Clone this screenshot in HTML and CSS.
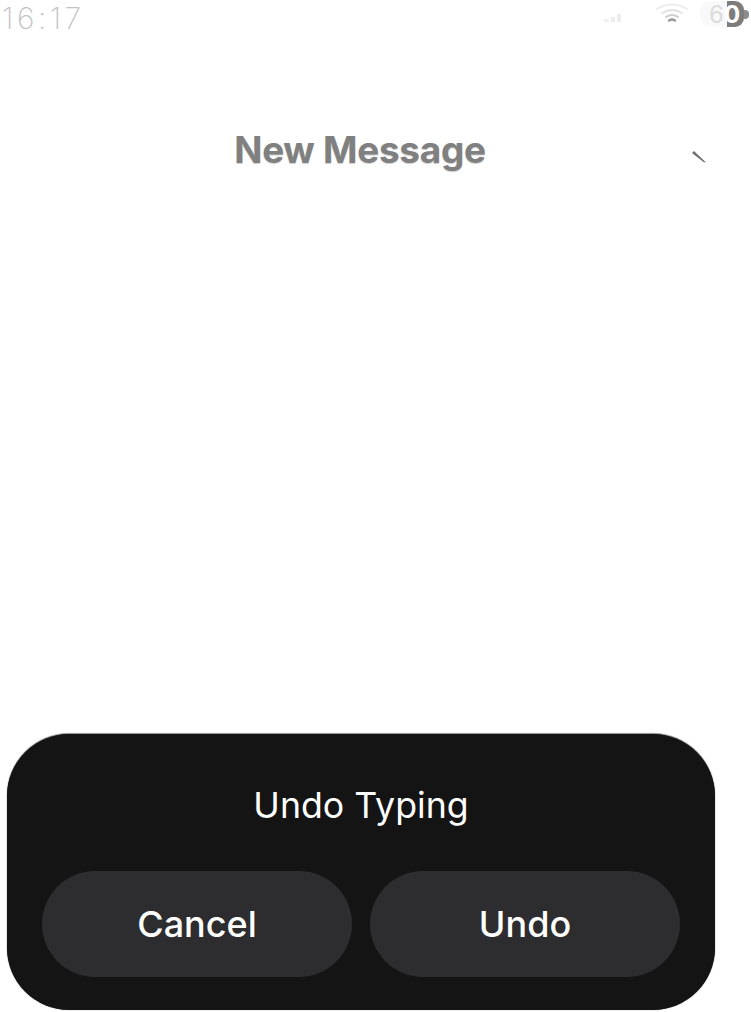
FILE: index.html
```html
<!DOCTYPE html>
<html lang="en">
<head>
    <meta charset="UTF-8">
    <meta name="viewport" content="width=device-width, initial-scale=1.0">
    <title>New Message</title>
    <link rel="stylesheet" href="styles.css">
</head>
<body>
    <div class="status-bar">
        <span class="time">16:17</span>
        <div class="status-icons">
            <svg class="signal" width="20" height="10" viewBox="0 0 20 10">
                <rect x="1" y="6" width="5" height="3" fill="#f1f1f1"/>
                <rect x="8" y="4" width="4" height="5" fill="#ececec"/>
                <rect x="14" y="1" width="4" height="8" fill="#ececec"/>
            </svg>
            <svg class="wifi" width="34" height="24" viewBox="0 0 34 24" fill="none" stroke-linecap="round">
                <path d="M2 8 Q17 -1 32 8" stroke="#ececec" stroke-width="2"/>
                <path d="M7 12 Q17 6 27 12" stroke="#e2e2e2" stroke-width="2"/>
                <path d="M11 16 Q17 12 23 16" stroke="#cfcfcf" stroke-width="2"/>
                <path d="M14 19.5 Q17 17.5 20 19.5" stroke="#9a9a9a" stroke-width="2.5"/>
            </svg>
            <div class="battery">
                <span class="battery-shell"></span>
                <span class="battery-end"></span>
                <span class="battery-cap"></span>
                <span class="battery-level"><span class="battery-digit">6</span>0</span>
            </div>
        </div>
    </div>

    <div class="nav-bar">
        <h1 class="nav-title">New Message</h1>
        <svg class="nav-mark" width="16" height="12" viewBox="0 0 16 12">
            <path d="M1 2 L3 0 L15 11.5 L12.5 11 Z" fill="#555555" opacity="0.85"/>
        </svg>
    </div>

    <div class="spacer"></div>

    <div class="sheet">
        <div class="sheet-title">Undo Typing</div>
        <div class="sheet-actions">
            <button class="sheet-button">Cancel</button>
            <button class="sheet-button">Undo</button>
        </div>
    </div>
</body>
</html>
```

FILE: styles.css
```css
html, body {
    height: 100%;
}

body {
    display: flex;
    flex-direction: column;
    margin: 0;
    background-color: #ffffff;
    font-family: Inter, "Liberation Sans", sans-serif;
    overflow: hidden;
}

.status-bar {
    display: flex;
    justify-content: space-between;
    align-items: flex-start;
    height: 30px;
    padding-left: 2px;
}

.time {
    font-size: 30px;
    font-weight: 200;
    line-height: 37px;
    letter-spacing: 3.5px;
    color: #c4c4c4;
}

.status-icons {
    display: flex;
    align-items: flex-start;
}

.signal {
    margin-top: 13px;
    margin-right: 32px;
}

.wifi {
    margin-top: 1px;
    margin-right: 11px;
}

.battery {
    position: relative;
    width: 51px;
    height: 28px;
}

.battery-shell {
    position: absolute;
    left: 0;
    top: 1px;
    width: 30px;
    height: 25px;
    border-radius: 9px 0 0 9px;
    background-color: #f9f9f9;
}

.battery-end {
    position: absolute;
    left: 27px;
    top: 1px;
    width: 17px;
    height: 26px;
    background-color: #7d7d7d;
    border-radius: 0 9px 9px 0;
}

.battery-cap {
    position: absolute;
    left: 44px;
    top: 10px;
    width: 5px;
    height: 9px;
    background-color: #8c8c8c;
    border-radius: 0 4px 4px 0;
}

.battery-level {
    position: absolute;
    left: 9px;
    top: 0;
    font-size: 24px;
    font-weight: 700;
    line-height: 29px;
    color: #ffffff;
}

.battery-digit {
    font-weight: 400;
    color: #dcdcdc;
}

.nav-bar {
    position: relative;
    display: flex;
    justify-content: center;
    padding: 98px 31px 0 0;
}

.nav-title {
    margin: 0;
    font-size: 37px;
    font-weight: 700;
    line-height: 44px;
    letter-spacing: -0.3px;
    color: #808080;
    text-shadow: 0 1px 1px rgba(0, 0, 0, 0.2);
}

.nav-mark {
    position: absolute;
    left: 691px;
    top: 121px;
}

.spacer {
    flex: 1;
}

.sheet {
    width: 708px;
    height: 276px;
    box-sizing: border-box;
    margin: 0 0 2px 7px;
    padding: 48px 35px 0;
    background-color: #141414;
    border-radius: 62px;
    box-shadow: 0 -1px 1px rgba(0, 0, 0, 0.4), 0 0 1px rgba(0, 0, 0, 0.6);
}

.sheet-title {
    height: 89px;
    font-size: 35.7px;
    line-height: 46px;
    text-align: center;
    color: #ffffff;
}

.sheet-actions {
    display: grid;
    grid-template-columns: 310px 310px;
    gap: 18px;
}

.sheet-button {
    height: 106px;
    padding: 0;
    border: none;
    border-radius: 53px;
    background-color: #2d2d2f;
    font-family: inherit;
    font-size: 36px;
    font-weight: 500;
    color: #ffffff;
}
```
